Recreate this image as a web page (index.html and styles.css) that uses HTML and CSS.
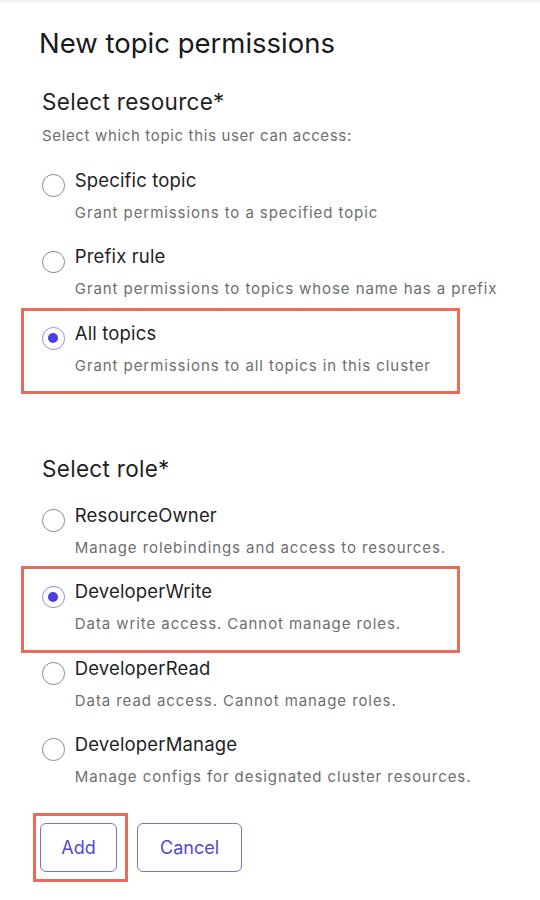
FILE: index.html
```html
<!DOCTYPE html>
<html lang="en">
<head>
<meta charset="utf-8">
<title>New topic permissions</title>
<link rel="stylesheet" href="styles.css">
</head>
<body>
<div class="topbar"></div>
<main class="page">
  <h1 class="title">New topic permissions</h1>

  <section class="group">
    <h2 class="group-title">Select resource*</h2>
    <p class="hint">Select which topic this user can access:</p>
    <div class="options">
      <div class="option">
        <span class="radio"></span>
        <span class="label">Specific topic</span>
        <span class="desc">Grant permissions to a specified topic</span>
      </div>
      <div class="option">
        <span class="radio"></span>
        <span class="label">Prefix rule</span>
        <span class="desc">Grant permissions to topics whose name has a prefix</span>
      </div>
      <div class="option highlighted">
        <span class="radio checked"></span>
        <span class="label">All topics</span>
        <span class="desc">Grant permissions to all topics in this cluster</span>
      </div>
    </div>
  </section>

  <section class="group role-group">
    <h2 class="group-title">Select role*</h2>
    <div class="options role-options">
      <div class="option">
        <span class="radio"></span>
        <span class="label">ResourceOwner</span>
        <span class="desc">Manage rolebindings and access to resources.</span>
      </div>
      <div class="option highlighted">
        <span class="radio checked"></span>
        <span class="label">DeveloperWrite</span>
        <span class="desc">Data write access. Cannot manage roles.</span>
      </div>
      <div class="option">
        <span class="radio"></span>
        <span class="label">DeveloperRead</span>
        <span class="desc">Data read access. Cannot manage roles.</span>
      </div>
      <div class="option">
        <span class="radio"></span>
        <span class="label">DeveloperManage</span>
        <span class="desc">Manage configs for designated cluster resources.</span>
      </div>
    </div>
  </section>

  <div class="actions">
    <span class="btn-mark"><button class="btn btn-add">Add</button></span>
    <button class="btn btn-cancel">Cancel</button>
  </div>
</main>
</body>
</html>
```

FILE: styles.css
```css
* { box-sizing: border-box; }

html, body {
  margin: 0;
  padding: 0;
  background: #ffffff;
}

body {
  font-family: Inter, "Noto Sans", "Liberation Sans", sans-serif;
  color: #1d1d1f;
  width: 540px;
  height: 900px;
  overflow: hidden;
}

.topbar {
  height: 3px;
  background: #f3f3f3;
}

.page {
  padding: 23.3px 0 0 42px;
}

.title {
  margin: 0 0 0 -3px;
  font-size: 27.5px;
  line-height: 34px;
  font-weight: 400;
  color: #1a1a1a;
}

.group-title {
  margin: 27.5px 0 0 0;
  font-size: 22.5px;
  line-height: 28px;
  font-weight: 400;
  color: #1f1f1f;
  letter-spacing: 0.3px;
}

.hint {
  margin: 10.4px 0 0 0;
  font-size: 15px;
  line-height: 20px;
  color: #6e6e6e;
  letter-spacing: 0.65px;
  white-space: nowrap;
}

.options {
  margin-top: 13.8px;
  display: flex;
  flex-direction: column;
}

.role-group .group-title {
  margin-top: 66.2px;
}

.role-options {
  margin-top: 11.9px;
}

.option {
  display: grid;
  grid-template-columns: 22.5px 1fr;
  grid-template-rows: 24px 20px;
  column-gap: 10.3px;
  row-gap: 11px;
  margin-left: -16px;
  padding: 8px 0 13.3px 16px;
  width: 429px;
}

.radio {
  grid-row: 1;
  grid-column: 1;
  width: 22.5px;
  height: 22.5px;
  margin-top: 6.5px;
  margin-bottom: -5px;
  border: 1.5px solid #8c8c8c;
  border-radius: 50%;
  background: #fff;
  position: relative;
}

.radio.checked {
  border-color: #968ceb;
}

.radio.checked::after {
  content: "";
  position: absolute;
  left: 50%;
  top: 50%;
  width: 10px;
  height: 10px;
  margin: -5px 0 0 -5px;
  border-radius: 50%;
  background: #4b3ee6;
}

.label {
  grid-row: 1;
  grid-column: 2;
  font-size: 18.5px;
  line-height: 24px;
  color: #1f1f1f;
  letter-spacing: 0.15px;
  white-space: nowrap;
}

.desc {
  grid-row: 2;
  grid-column: 2;
  font-size: 15px;
  line-height: 20px;
  color: #6e6e6e;
  letter-spacing: 0.92px;
  white-space: nowrap;
}

.highlighted {
  outline: 3px solid #ec6a5c;
  outline-offset: 2px;
}

.actions {
  margin-top: 22.8px;
  display: flex;
  align-items: flex-start;
  gap: 16px;
  margin-left: -2px;
}

.btn-mark {
  display: inline-flex;
  padding: 3px 4px 3px 0;
  margin: -3px 0;
  outline: 3px solid #ec6a5c;
  outline-offset: 4px;
}

.btn {
  height: 49px;
  padding: 0;
  background: #fff;
  border: 1.5px solid #7a6ed8;
  border-radius: 6px;
  font-family: Inter, "Noto Sans", "Liberation Sans", sans-serif;
  font-size: 18px;
  color: #5449c9;
  text-align: center;
}

.btn-add { width: 77px; }
.btn-cancel { width: 105px; }
```
